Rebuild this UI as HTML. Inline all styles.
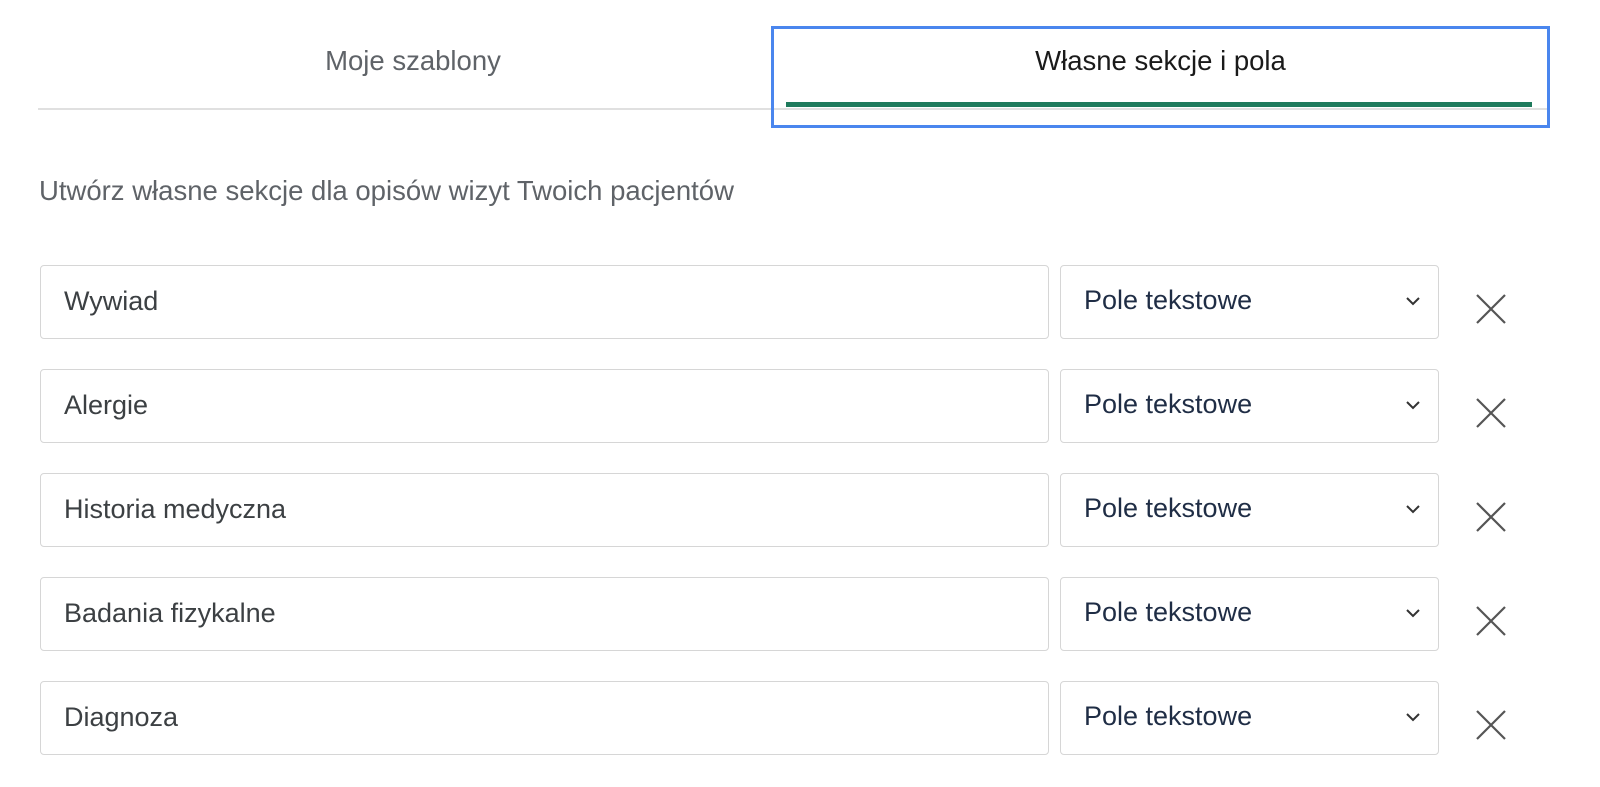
<!DOCTYPE html>
<html><head><meta charset="utf-8"><style>
body{margin:0;width:1600px;height:787px;background:#fff;font-family:"Liberation Sans",sans-serif;position:relative;overflow:hidden}
.a{position:absolute}
.tab{font-size:27.5px;text-align:center}
.inp{position:absolute;left:40px;width:1007px;height:72px;border:1px solid #d6d6d6;border-radius:4px;box-sizing:content-box}
.inp span{position:absolute;left:23px;top:20px;font-size:27px;color:#3c4043}
.sel{position:absolute;left:1060px;width:377px;height:72px;border:1px solid #d6d6d6;border-radius:4px}
.sel span{position:absolute;left:23px;top:19px;font-size:27px;color:#1f2d45}
.sel svg{position:absolute;right:18px;top:31px}
.x{position:absolute;left:1475px}
</style></head><body>
<div class="a tab" style="left:38px;width:750px;top:45px;color:#5f6368">Moje szablony</div>
<div class="a" style="left:38px;top:108px;width:1512px;height:2px;background:#e0e0e0"></div>
<div class="a" style="left:771px;top:26px;width:773px;height:96px;border:3px solid #4a86ee"></div>
<div class="a tab" style="left:774px;width:773px;top:45px;color:#1a1a1a">Własne sekcje i pola</div>
<div class="a" style="left:786px;top:102px;width:746px;height:5px;background:#1e7a5c"></div>
<div class="a" style="left:39px;top:175px;font-size:27.5px;color:#5f6368">Utwórz własne sekcje dla opisów wizyt Twoich pacjentów</div>

<div class="inp" style="top:265px"><span>Wywiad</span></div>
<div class="inp" style="top:369px"><span>Alergie</span></div>
<div class="inp" style="top:473px"><span>Historia medyczna</span></div>
<div class="inp" style="top:577px"><span>Badania fizykalne</span></div>
<div class="inp" style="top:681px"><span>Diagnoza</span></div>

<div class="sel" style="top:265px"><span>Pole tekstowe</span><svg width="14" height="9"><path d="M1 1l6 6 6-6" stroke="#333" stroke-width="2" fill="none"/></svg></div>
<div class="sel" style="top:369px"><span>Pole tekstowe</span><svg width="14" height="9"><path d="M1 1l6 6 6-6" stroke="#333" stroke-width="2" fill="none"/></svg></div>
<div class="sel" style="top:473px"><span>Pole tekstowe</span><svg width="14" height="9"><path d="M1 1l6 6 6-6" stroke="#333" stroke-width="2" fill="none"/></svg></div>
<div class="sel" style="top:577px"><span>Pole tekstowe</span><svg width="14" height="9"><path d="M1 1l6 6 6-6" stroke="#333" stroke-width="2" fill="none"/></svg></div>
<div class="sel" style="top:681px"><span>Pole tekstowe</span><svg width="14" height="9"><path d="M1 1l6 6 6-6" stroke="#333" stroke-width="2" fill="none"/></svg></div>

<svg class="x" style="top:293px" width="32" height="32"><path d="M2 2L30 30M30 2L2 30" stroke="#555" stroke-width="2.2"/></svg>
<svg class="x" style="top:397px" width="32" height="32"><path d="M2 2L30 30M30 2L2 30" stroke="#555" stroke-width="2.2"/></svg>
<svg class="x" style="top:501px" width="32" height="32"><path d="M2 2L30 30M30 2L2 30" stroke="#555" stroke-width="2.2"/></svg>
<svg class="x" style="top:605px" width="32" height="32"><path d="M2 2L30 30M30 2L2 30" stroke="#555" stroke-width="2.2"/></svg>
<svg class="x" style="top:709px" width="32" height="32"><path d="M2 2L30 30M30 2L2 30" stroke="#555" stroke-width="2.2"/></svg>
</body></html>
